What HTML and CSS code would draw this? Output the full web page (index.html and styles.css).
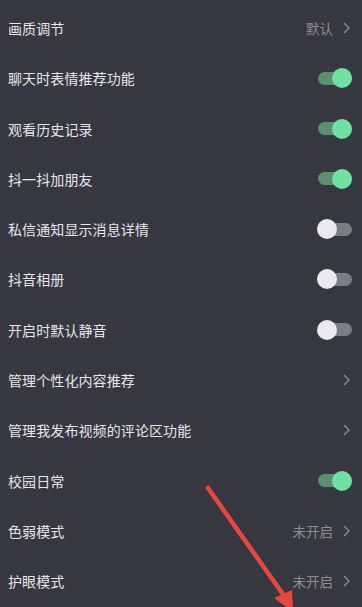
FILE: index.html
```html
<!DOCTYPE html>
<html lang="zh">
<head>
<meta charset="utf-8">
<link rel="stylesheet" href="styles.css">
</head>
<body>
<div class="list">
  <div class="row"><span class="label">画质调节</span><span class="right"><span class="value">默认</span><svg class="chev" viewBox="0 0 8 12"><path d="M1.5 1.5 L6 6 L1.5 10.5"/></svg></span></div>
  <div class="row"><span class="label">聊天时表情推荐功能</span><span class="toggle on"></span></div>
  <div class="row"><span class="label">观看历史记录</span><span class="toggle on"></span></div>
  <div class="row"><span class="label">抖一抖加朋友</span><span class="toggle on"></span></div>
  <div class="row"><span class="label">私信通知显示消息详情</span><span class="toggle off"></span></div>
  <div class="row"><span class="label">抖音相册</span><span class="toggle off"></span></div>
  <div class="row"><span class="label">开启时默认静音</span><span class="toggle off"></span></div>
  <div class="row"><span class="label">管理个性化内容推荐</span><span class="right"><svg class="chev" viewBox="0 0 8 12"><path d="M1.5 1.5 L6 6 L1.5 10.5"/></svg></span></div>
  <div class="row"><span class="label">管理我发布视频的评论区功能</span><span class="right"><svg class="chev" viewBox="0 0 8 12"><path d="M1.5 1.5 L6 6 L1.5 10.5"/></svg></span></div>
  <div class="row"><span class="label">校园日常</span><span class="toggle on"></span></div>
  <div class="row"><span class="label">色弱模式</span><span class="right"><span class="value">未开启</span><svg class="chev" viewBox="0 0 8 12"><path d="M1.5 1.5 L6 6 L1.5 10.5"/></svg></span></div>
  <div class="row"><span class="label">护眼模式</span><span class="right"><span class="value">未开启</span><svg class="chev" viewBox="0 0 8 12"><path d="M1.5 1.5 L6 6 L1.5 10.5"/></svg></span></div>
</div>
<svg class="arrow" viewBox="0 0 362 607" width="362" height="607">
  <path d="M208 488 L287 600" stroke="#e9463f" stroke-width="4.5" stroke-linecap="round" fill="none"/>
  <path d="M274 598 L293 612 L292 590 Z" fill="#e9463f"/>
</svg>
</body>
</html>
```
FILE: styles.css
```css
html, body {
  margin: 0;
  padding: 0;
  background: #363741;
  overflow: hidden;
}
body {
  width: 362px;
  height: 607px;
  position: relative;
  font-family: "Noto Sans CJK SC", "Noto Sans", sans-serif;
}
.list {
  display: flex;
  flex-direction: column;
  padding-top: 3px;
}
.row {
  height: 50.27px;
  display: flex;
  align-items: center;
  justify-content: space-between;
  padding: 0 11px 0 8px;
}
.label {
  font-size: 14px;
  color: #e6e6ea;
  letter-spacing: 0.1px;
}
.right {
  display: flex;
  align-items: center;
  gap: 10px;
}
.value {
  font-size: 13.5px;
  color: #8b8c94;
}
.chev {
  width: 8px;
  height: 12px;
  fill: none;
  stroke: #8b8c94;
  stroke-width: 1.4;
  stroke-linecap: round;
  stroke-linejoin: round;
}
.toggle {
  position: relative;
  width: 34px;
  height: 13px;
  border-radius: 7px;
  margin-right: -1px;
}
.toggle::after {
  content: "";
  position: absolute;
  top: -3.5px;
  width: 20px;
  height: 20px;
  border-radius: 50%;
}
.toggle.on { background: #5c8e71; }
.toggle.on::after { right: 0; background: #6fe2a2; }
.toggle.off { background: #7b7c88; }
.toggle.off::after { left: -1px; background: #e9e9ee; }
.arrow {
  position: absolute;
  left: 0;
  top: 0;
  pointer-events: none;
}
```
